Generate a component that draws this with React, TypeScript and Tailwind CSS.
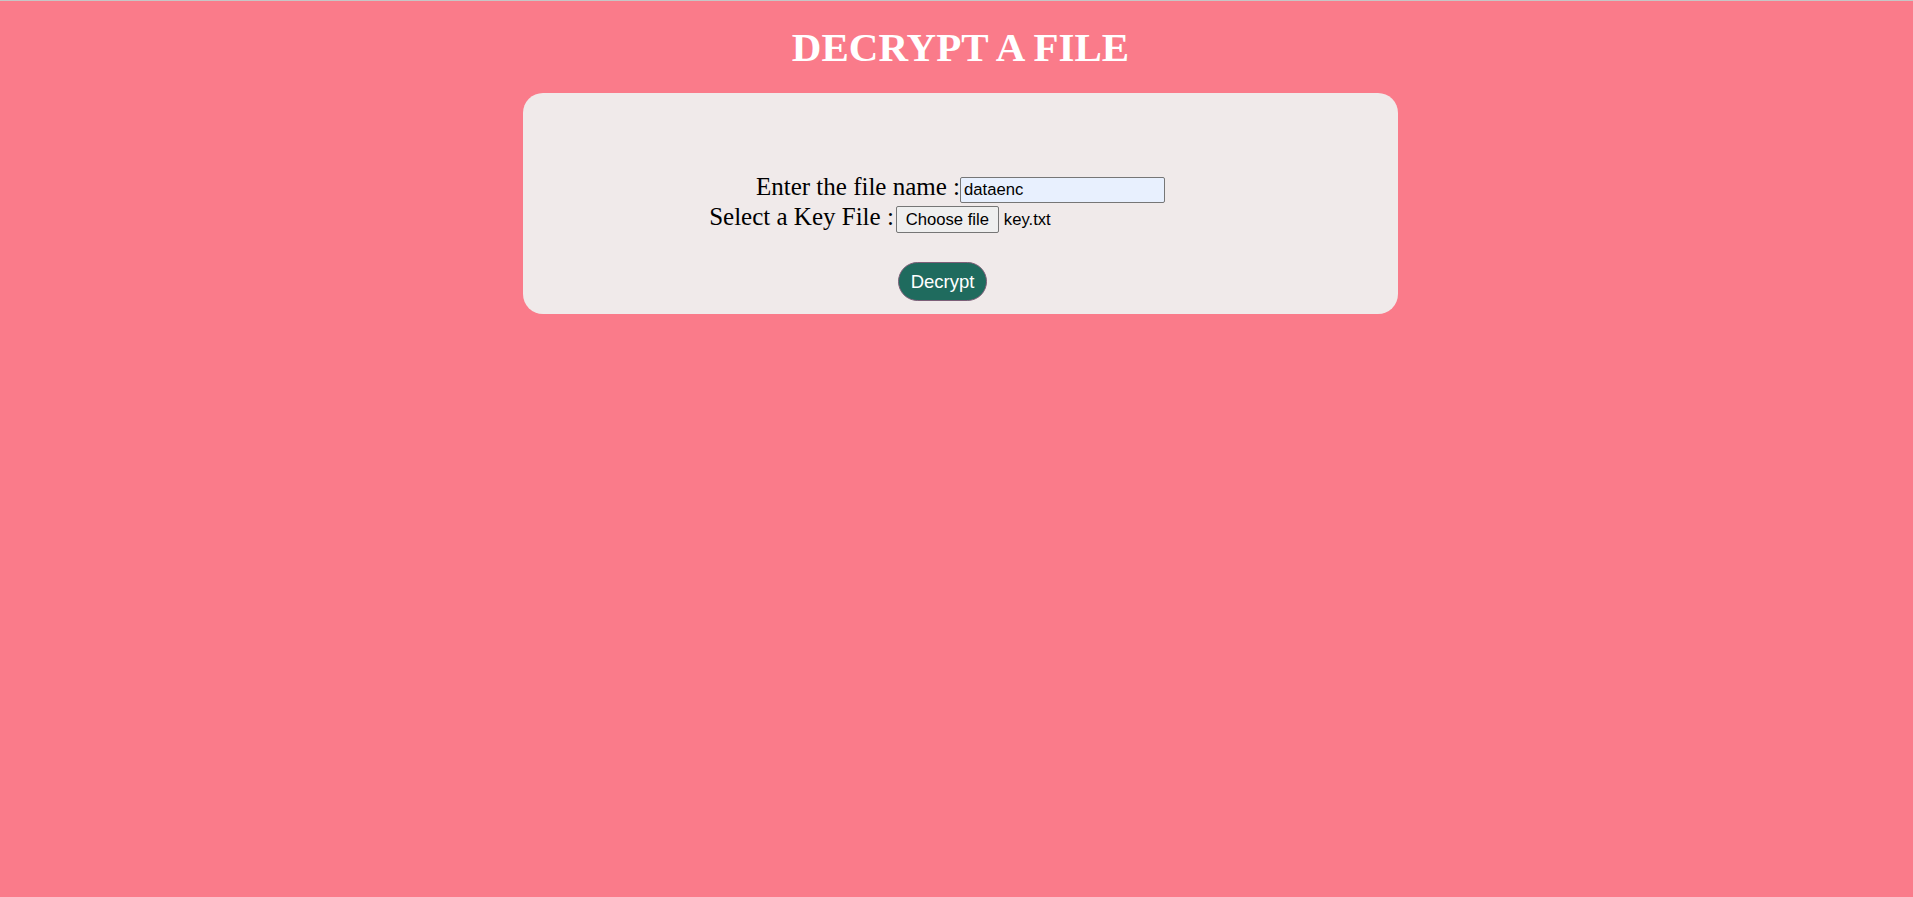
// Decrypt page
const serif = "font-['Liberation_Serif','Times_New_Roman',serif]";
const sans = "font-['Liberation_Sans',Arial,sans-serif]";

export default function App() {
  return (
    <div className="min-h-screen border-t border-[#c6c6c6] bg-[#fa7b8a] pl-2">
      <h1
        className={`${serif} mt-[24px] text-center text-[41px] font-bold leading-[44px] text-white`}
      >
        DECRYPT A FILE
      </h1>

      <div className="mx-auto mt-[24px] h-[221px] w-[875px] rounded-[20px] bg-[#f0eaea] pt-[80px]">
        {/* file name row */}
        <div className="flex h-[30px] items-baseline justify-center">
          <span className={`${serif} text-[25px] leading-[27.7px] text-black`}>
            Enter the file name :
          </span>
          <input
            readOnly
            value="dataenc"
            className={`${sans} h-[26px] w-[205px] rounded-[2px] border border-[#767676] bg-[#e8f0fe] px-[3px] text-[16.67px] text-black outline-none`}
          />
        </div>

        {/* key file row */}
        <div className="flex items-baseline justify-center">
          <span className={`${serif} text-[25px] leading-[27.7px] text-black`}>
            Select a Key File :
          </span>
          <div className={`${sans} ml-[2px] flex w-[316px] items-baseline text-[16.67px] text-black`}>
            <button className="h-[27px] w-[103px] rounded-[2px] border border-[#767676] bg-[#efefef] leading-[25px]">
              Choose file
            </button>
            <span className="ml-[5px]">key.txt</span>
          </div>
        </div>

        {/* action */}
        <div className="mt-[29px] flex justify-center pr-[36px]">
          <button
            className={`${sans} h-[39px] w-[89px] rounded-full border-[1.5px] border-[#7d5f78] bg-[#1f6b5e] text-[18.5px] text-white`}
          >
            Decrypt
          </button>
        </div>
      </div>
    </div>
  );
}
